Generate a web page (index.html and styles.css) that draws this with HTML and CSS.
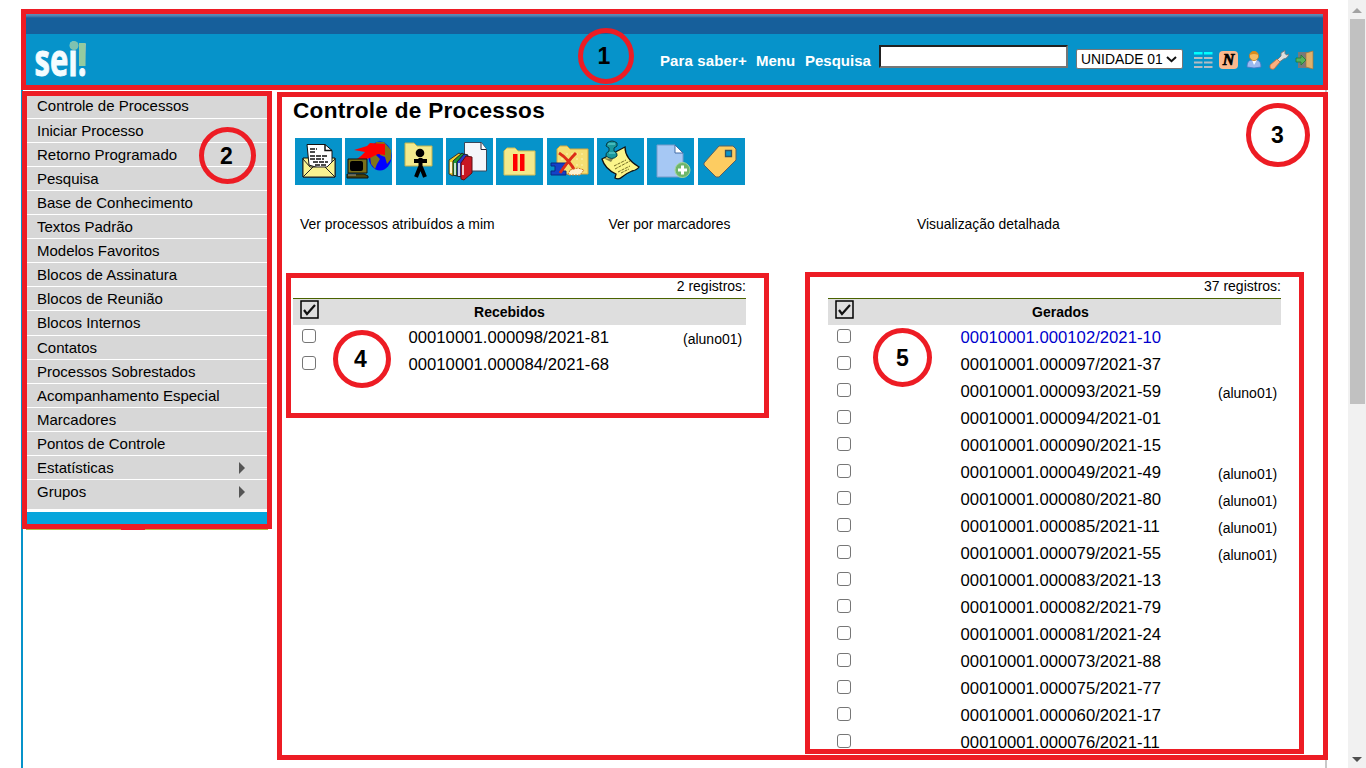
FILE: index.html
```html
<!DOCTYPE html>
<html lang="pt-BR">
<head>
<meta charset="utf-8">
<title>SEI - Controle de Processos</title>
<link rel="stylesheet" href="styles.css">
</head>
<body>
<div class="window">
<div class="page">
  <header class="header">
    <div class="govbar"></div>
    <div class="topbar">
      <svg class="logo" width="58" height="53" viewBox="0 -8 58 53">
        <text x="0.5" y="33.500" textLength="52" lengthAdjust="spacingAndGlyphs" class="logo-text">sei!</text>
        <circle cx="40" cy="3.500" r="4.500" fill="#7fc2b0"/>
        <rect x="45" y="1" width="6.500" height="23" fill="#94cb9f"/>
      </svg>
      <nav class="tools">
        <a class="t-saber">Para saber+</a><a class="t-menu">Menu</a><a class="t-pesq">Pesquisa</a>
        <input class="search" type="text">
        <div class="unit"><span>UNIDADE 01</span><svg width="11" height="7" viewBox="0 0 11 7"><path d="M1 1l4.500 4.200L10 1" fill="none" stroke="#111" stroke-width="2"/></svg></div>
        <svg class="ti i-table" width="19" height="20" viewBox="0 0 19 20"><path d="M0 3.200h8.500M10 3.200h8.500" stroke="#0ff" stroke-width="2.500"/><path d="M0 8h8.500M10 8h8.500M0 12.500h8.500M10 12.500h8.500M0 17h8.500M10 17h8.500" stroke="#b5bcc2" stroke-width="2"/></svg>
        <span class="ti i-n">N</span>
        <svg class="ti i-user" width="16" height="20" viewBox="0 0 16 20"><path d="M1 17q0-7 5-7h5q4 1 4 7l-7 1z" fill="#9bb9ef" stroke="#4c78c5" stroke-width=".8"/><path d="M6 10l2 5 3-5z" fill="#fff"/><circle cx="8" cy="6" r="4.600" fill="#f6bc63" stroke="#bd7a22" stroke-width=".8"/><path d="M4 5q1-4 4-4t4 4q-4-2-8 0z" fill="#d98b1c"/></svg>
        <svg class="ti i-wrench" width="20" height="20" viewBox="0 0 20 20"><path d="M8 10L12 6V3l4-2.500v3l1.500 1.500 2-1q0 4-5 5l-4 3z" fill="#dedede" stroke="#777" stroke-width=".9"/><path d="M1 15l7-6 3 3-6 7q-2 1-4-1z" fill="#fdb080" stroke="#c76b38" stroke-width=".8"/></svg>
        <svg class="ti i-door" width="20" height="20" viewBox="0 0 20 20"><path d="M3 2h9v16H3z" fill="#777a7b"/><path d="M11 3l7-2v18l-7-2z" fill="#dfb06a" stroke="#a5763b" stroke-width=".7"/><path d="M1 8h5V5l5 5-5 5v-3H1z" fill="#54b45b" stroke="#217833" stroke-width=".8"/></svg>
      </nav>
    </div>
  </header>
  <div class="body">
    <aside class="sidebar">
      <ul class="menu">
        <li>Controle de Processos</li><li>Iniciar Processo</li><li>Retorno Programado</li><li>Pesquisa</li><li>Base de Conhecimento</li><li>Textos Padrão</li><li>Modelos Favoritos</li><li>Blocos de Assinatura</li><li>Blocos de Reunião</li><li>Blocos Internos</li><li>Contatos</li><li>Processos Sobrestados</li><li>Acompanhamento Especial</li><li>Marcadores</li><li>Pontos de Controle</li><li class="sub">Estatísticas</li><li class="sub">Grupos</li>
      </ul>
      <div class="menu-end"></div>
    </aside>
    <main class="content">
      <h1>Controle de Processos</h1>
      <div class="actions">
        <svg viewBox="0 0 47 47"><path d="M8 20h32v19H8z" fill="#f8f391" stroke="#111"/><path d="M12 6.500h18l7 6V28l-10 3-13-4z" fill="#fff" stroke="#111"/><path d="M30 6.500v6h7" fill="none" stroke="#111" stroke-width="1.500"/><path d="M15 11h7M15 14h5M15 18h17M15 21h14M18 24h15M20 27h11" stroke="#111" stroke-width="1.300" stroke-dasharray="5 1"/><path d="M8 21l7 8h17l8-8v18H8z" fill="#f8f391"/><path d="M8 21l7 8h17l8-8M8 39l10-10M40 39L30 29M8 20v19h32V20" fill="none" stroke="#222"/></svg>
        <svg viewBox="0 0 47 47"><ellipse cx="35" cy="18" rx="11.500" ry="14.500" fill="#00f"/><path d="M31 4l8 0 7 8v9l-4 5-2-7-5-2 2-6-8-2zM25 18l5-2 5 5-3 5-2 5-4-5z" fill="#807519"/><path d="M9 12l13-4 3-3 15 1v11l-7-1-8 4-7 2-6-1 4-3 4-4z" fill="#f00"/><path d="M3 21h19v14H3z" fill="#79701a" stroke="#111"/><rect x="5" y="23" width="13" height="10" rx="2" fill="#000"/><path d="M2 36h17l4 2v2H2z" fill="#49440c" stroke="#111"/><path d="M3 37h8" stroke="#999"/></svg>
        <svg viewBox="0 0 47 47"><path d="M9 5h9l3 3h15v20H9z" fill="#f3ea8d" stroke="#c0b14e"/><circle cx="24" cy="15" r="4.300"/><path d="M18 23h13M24.500 20v11M24 29l-4 10M25 29l4 10" stroke="#000" stroke-width="4" fill="none"/></svg>
        <svg viewBox="0 0 47 47"><path d="M18.500 4.500h17l5 7V33h-22z" fill="#f4f6fa" stroke="#38485b"/><path d="M35 4.500v7h5.500" fill="#fff" stroke="#223"/><path d="M3 22l10-7 3 2-9 21-4-2z" fill="#f2cc2b" stroke="#333"/><path d="M7 23l9-8 3 2-8 21-4-1z" fill="#1b9a34" stroke="#222"/><path d="M11 24l7-8 4 1-6 22-5-1z" fill="#223bcb" stroke="#222"/><path d="M15 25l5-7 6 1v16l-8 7-3-1z" fill="#c91722" stroke="#5a1015"/><path d="M5 24v11M9 25v12M13 25v13M17 27v10" stroke="#fff" stroke-width="1.500"/></svg>
        <svg viewBox="0 0 47 47"><path d="M8 13l3-3h8l3 3h17v24H8z" fill="#f3e98b" stroke="#d2bd55"/><path d="M17 16h4.500v17H17zM24 16h4.500v17H24z" fill="#f00"/></svg>
        <svg viewBox="0 0 47 47"><path d="M10 11l3-3h7l3 3h18v25H10z" fill="#f5df73" stroke="#d6a63d"/><path d="M14 16h23M14 21h23M14 27h23" stroke="#fff3ae" stroke-dasharray="2 3"/><path d="M4 25h15v3h-3v5h3v4H4v-4h4v-5H4z" fill="#1641c8" stroke="#092b83"/><path d="M12 15q10 6 17 20M29 15q-8 8-16 20" fill="none" stroke="#dc2d18" stroke-width="3"/><path d="M23 32l8-2 6 2-4 5H21z" fill="#fff0cd" stroke="#ce7c26" stroke-dasharray="2 1"/></svg>
        <svg viewBox="0 0 47 47"><path d="M28 9q0 12 14 20-2 3-7 4-5 2-10 6-3 3-7 1l1-4Q8 31 5 21z" fill="#fbf58a" stroke="#111" stroke-width="1.300"/><path d="M17 28l12-6M18 31l15-8M21 34l12-6M24 35l8-4" stroke="#746b25" stroke-dasharray="3 1"/><path d="M6 20l8 4 2-3z" fill="#8a8349"/><path d="M10 5q5-4 10 0v3l-3 2v3q4 2 3 5-5 5-11 0-1-3 3-5v-3l-3-2z" fill="#1a999d" stroke="#073c43"/><path d="M11 6h7M12 15h6" stroke="#73dada"/></svg>
        <svg viewBox="0 0 47 47"><path d="M10 7h18l8 8v24H10z" fill="#a6c8f4" stroke="#789bc9"/><path d="M28 7v8h8z" fill="#fff" stroke="#426ca7"/><circle cx="35.500" cy="32" r="7.500" fill="#6fb66a" stroke="#a6d79e"/><path d="M31 32h9M35.500 27.500v9" stroke="#fff" stroke-width="3"/></svg>
        <svg viewBox="0 0 47 47"><path d="M21 8h14l3 3v11L21 39h-3L6 27v-2z" fill="#fdcc61" stroke="#5b6060"/><path d="M27.500 12.500h6v6h-6z" fill="#0693ca" stroke="#34545e" stroke-width="1.300"/></svg>
      </div>
      <div class="views"><a>Ver processos atribuídos a mim</a><a>Ver por marcadores</a><a>Visualização detalhada</a></div>
      <div class="lists">
        <section class="list received">
          <div class="caption">2 registros:</div>
          <div class="head"><svg class="all" viewBox="0 0 19 19"><path d="M1 1h17v17H1z" fill="none" stroke="#000" stroke-width="1.500"/><path d="M4 10l3 4 8-9" fill="none" stroke="#111" stroke-width="2.200"/></svg><b>Recebidos</b></div>
          <div class="row"><input type="checkbox"><a>00010001.000098/2021-81</a><i>(aluno01)</i></div>
          <div class="row"><input type="checkbox"><a>00010001.000084/2021-68</a></div>
        </section>
        <section class="list generated">
          <div class="caption">37 registros:</div>
          <div class="head"><svg class="all" viewBox="0 0 19 19"><path d="M1 1h17v17H1z" fill="none" stroke="#000" stroke-width="1.500"/><path d="M4 10l3 4 8-9" fill="none" stroke="#111" stroke-width="2.200"/></svg><b>Gerados</b></div>
          <div class="row"><input type="checkbox"><a class="new">00010001.000102/2021-10</a></div>
          <div class="row"><input type="checkbox"><a>00010001.000097/2021-37</a></div>
          <div class="row"><input type="checkbox"><a>00010001.000093/2021-59</a><i>(aluno01)</i></div>
          <div class="row"><input type="checkbox"><a>00010001.000094/2021-01</a></div>
          <div class="row"><input type="checkbox"><a>00010001.000090/2021-15</a></div>
          <div class="row"><input type="checkbox"><a>00010001.000049/2021-49</a><i>(aluno01)</i></div>
          <div class="row"><input type="checkbox"><a>00010001.000080/2021-80</a><i>(aluno01)</i></div>
          <div class="row"><input type="checkbox"><a>00010001.000085/2021-11</a><i>(aluno01)</i></div>
          <div class="row"><input type="checkbox"><a>00010001.000079/2021-55</a><i>(aluno01)</i></div>
          <div class="row"><input type="checkbox"><a>00010001.000083/2021-13</a></div>
          <div class="row"><input type="checkbox"><a>00010001.000082/2021-79</a></div>
          <div class="row"><input type="checkbox"><a>00010001.000081/2021-24</a></div>
          <div class="row"><input type="checkbox"><a>00010001.000073/2021-88</a></div>
          <div class="row"><input type="checkbox"><a>00010001.000075/2021-77</a></div>
          <div class="row"><input type="checkbox"><a>00010001.000060/2021-17</a></div>
          <div class="row"><input type="checkbox"><a>00010001.000076/2021-11</a></div>
        </section>
      </div>
    </main>
  </div>
</div>
<div class="scrollbar"><span class="up"></span><span class="thumb"></span><span class="down"></span></div>
<div class="box box1"></div><div class="box box2"></div><div class="box box3"></div><div class="box box4"></div><div class="box box5"></div>
<div class="mark mark1">1</div><div class="mark mark2">2</div><div class="mark mark3">3</div><div class="mark mark4">4</div><div class="mark mark5">5</div>
<div class="tick"></div>
</div>
</body>
</html>
```
FILE: styles.css
```css
* { box-sizing: border-box; }
body { margin: 0; background: #fff; color: #000; font-family: "Liberation Sans", Arial, sans-serif; }
.window { position: relative; display: flex; justify-content: space-between; width: 1366px; height: 768px; overflow: hidden; }
.page { width: 1306px; margin: 12px 0 0 21px; border-left: 2px solid #0693ca; border-right: 2px solid #c8c8c8; height: 756px; }
.header { height: 75px; }
.govbar { height: 22px; background: linear-gradient(#5c8fb8 0 2px, #4b80ad 4px, #165f9b 6px); }
.topbar { height: 53px; background: #0693ca; display: flex; justify-content: space-between; padding: 0 10px 0 11px; }
.logo { overflow: visible; }
.logo-text { font: 700 44px "Open Sans", "Noto Sans", sans-serif; fill: #f4fcff; stroke: #f4fcff; stroke-width: .9px; }
.tools { display: flex; align-items: flex-start; padding-top: 8px; color: #fff; font-weight: 700; font-size: 15px; line-height: 18px; white-space: nowrap; }
.tools a { margin-top: 10px; }
.t-saber { width: 96px; letter-spacing: .12px; }
.t-menu { width: 49px; }
.t-pesq { width: 74px; }
.search { width: 189px; height: 23px; margin: 3px 8px 0 0; padding: 0; border: 2px inset #767676; background: #fff; }
.unit { display: flex; align-items: center; justify-content: space-between; width: 107px; height: 20px; margin: 7px 11px 0 0; padding: 0 5px 0 4px; background: #fff; border: 1px solid #767676; border-radius: 2px; color: #000; font-weight: 400; font-size: 13.9px; }
.ti { margin-top: 8px; flex: none; }
.i-table { margin-right: 6px; }
.i-n { width: 19px; height: 18px; margin-top: 9px; margin-right: 8px; border-radius: 4px; background: #fbb88d; color: #000; font: italic 900 16px/18px "Liberation Serif", serif; text-align: center; -webkit-text-stroke: .7px #000; }
.i-user { margin-right: 7px; }
.i-wrench { margin-right: 6px; }
.body { display: flex; padding-top: 4px; }
.sidebar { width: 247px; padding: 3px 2px 0 3px; }
.menu { list-style: none; margin: 0; padding: 0 0 4.400px; background: #d7d7d7; }
.menu li { height: 24.1px; padding-left: 11px; border-bottom: 1px solid #fff; font-size: 15px; line-height: 24px; }
.menu li:first-child { height: 24.7px; }
.menu li:last-child { border-bottom: 0; }
.sub { display: flex; justify-content: space-between; align-items: center; padding-right: 23px; }
.sub::after { content: ""; border-left: 6px solid #555; border-top: 6px solid transparent; border-bottom: 6px solid transparent; }
.menu-end { height: 18px; margin-top: 3px; background: #06a5dc; border-bottom: 1px solid #b8b944; }
.content { flex: 1; padding: 7px 0 0 23px; }
h1 { margin: 0; font-size: 22.6px; line-height: 26px; letter-spacing: .28px; }
.actions { display: flex; gap: 3.35px; padding: 14px 0 0 2px; }
.actions svg { width: 47px; height: 47px; background: #0693ca; }
.views { display: grid; grid-template-columns: 308.5px 308.5px auto; margin: 30px 0 0 7px; font-size: 13.9px; line-height: 18px; }
.lists { display: flex; gap: 82px; margin-top: 43px; }
.list { width: 453px; }
.caption { height: 22px; line-height: 20px; font-size: 14px; text-align: right; }
.head { height: 27px; border-top: 1px solid #4a6300; background: #dedede; display: grid; grid-template-columns: 138px 1fr 126px; font-size: 14px; line-height: 26px; }
.received .head { grid-template-columns: 116px 1fr 136px; }
.head b { text-align: center; }
.all { width: 19px; height: 19px; margin: 1px 0 0 7px; }
.row { display: grid; grid-template-columns: 132.6px 248.4px auto; height: 27px; font-size: 16.7px; line-height: 26px; }
.received .row { grid-template-columns: 115.5px 269.5px auto; }
.generated .row i { padding-left: 9px; }
.row i { font-size: 14px; line-height: 28px; font-style: normal; padding-left: 5px; }
.row input { appearance: none; width: 14px; height: 14px; margin: 4px 0 0 9px; border: 1px solid #767676; border-radius: 3px; background: #fff; }
.new { color: #0000cc; }
.scrollbar { width: 18px; height: 768px; background: #f1f1f1; display: flex; flex-direction: column; align-items: center; padding-top: 8px; }
.up { border: 5px solid transparent; border-top: 0; border-bottom: 5px solid #a3a3a3; }
.thumb { width: 15px; height: 385px; margin-top: 6px; background: #c1c1c1; }
.down { margin: auto 0 6px; border: 5px solid transparent; border-bottom: 0; border-top: 5px solid #505050; }
/* numbered callouts laid over the page */
.box { position: absolute; border: 5px solid #ed1c24; }
.box1 { left: 21px; top: 9px; width: 1307px; height: 81px; }
.box2 { left: 22px; top: 91px; width: 250px; height: 438px; }
.box3 { left: 277px; top: 92px; width: 1051px; height: 668px; }
.box4 { left: 286px; top: 273px; width: 483px; height: 145px; }
.box5 { left: 805px; top: 272px; width: 499px; height: 482px; }
.mark { position: absolute; display: flex; align-items: center; justify-content: center; border: 5px solid #ed1c24; border-radius: 50%; font-weight: 700; font-size: 23px; line-height: 1; }
.mark1 { left: 578px; top: 28px; width: 56px; height: 56px; padding-right: 4px; }
.mark2 { left: 199px; top: 127px; width: 57px; height: 57px; padding-right: 2px; padding-top: 1px; }
.mark3 { left: 1246px; top: 103px; width: 64px; height: 64px; padding-right: 1px; }
.mark4 { left: 333px; top: 330px; width: 58px; height: 58px; padding-right: 3px; padding-top: 1px; }
.mark5 { left: 873px; top: 328px; width: 59px; height: 59px; padding-top: 1px; }
.tick { position: absolute; left: 121px; top: 529px; width: 24px; height: 1px; background: #ed1c24; }
```
